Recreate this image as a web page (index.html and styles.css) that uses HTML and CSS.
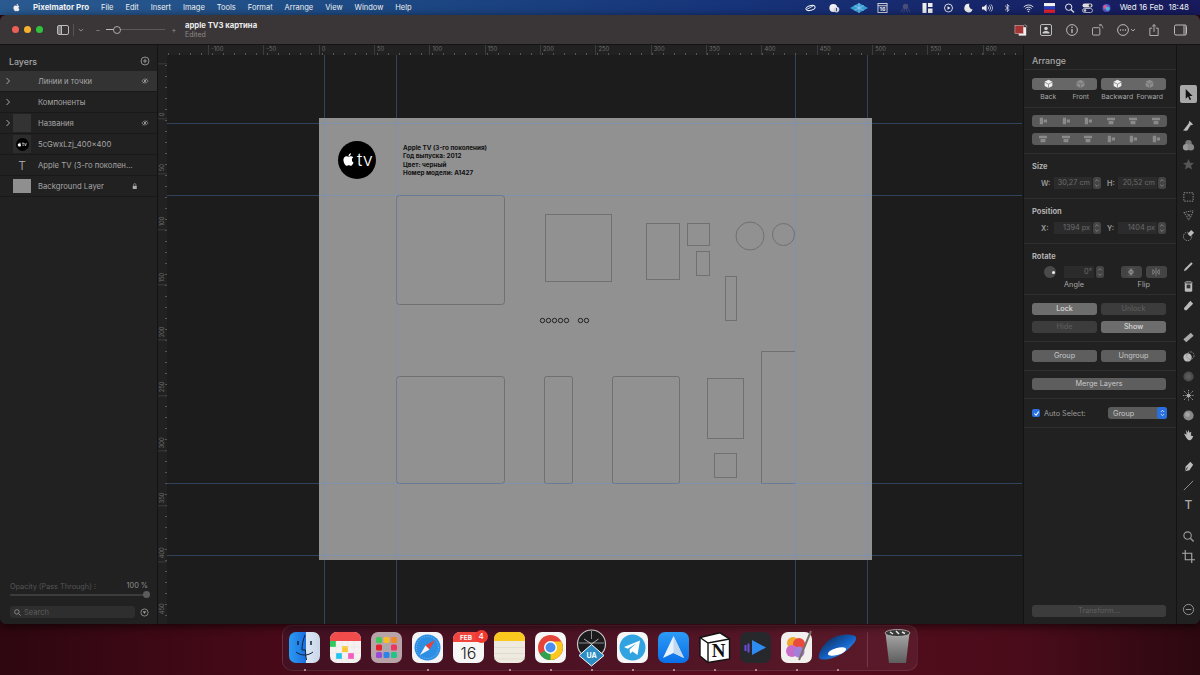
FILE: index.html
```html
<!DOCTYPE html>
<html lang="en">
<head>
<meta charset="utf-8">
<title>Pixelmator Pro</title>
<link rel="stylesheet" href="styles.css">
</head>
<body>
<svg class="defs" width="0" height="0" aria-hidden="true">
  <defs>
    <symbol id="apple" viewBox="0 0 24 24"><path d="M18.71 19.5c-.83 1.24-1.71 2.45-3.05 2.47-1.34.03-1.77-.79-3.29-.79-1.53 0-2 .77-3.27.82-1.31.05-2.3-1.32-3.14-2.53C4.25 17 2.94 12.45 4.7 9.39c.87-1.52 2.43-2.48 4.12-2.51 1.28-.02 2.5.87 3.29.87.78 0 2.26-1.07 3.81-.91.65.03 2.47.26 3.64 1.98-.09.06-2.17 1.28-2.15 3.81.03 3.02 2.65 4.03 2.68 4.04-.03.07-.42 1.44-1.38 2.83M13 3.5c.73-.83 1.94-1.46 2.94-1.5.13 1.17-.34 2.35-1.04 3.19-.69.85-1.83 1.51-2.95 1.42-.15-1.15.41-2.35 1.05-3.11z"/></symbol>
    <symbol id="step" viewBox="0 0 8 12"><rect width="8" height="12" rx="2.5" fill="#444"/><path d="M2.2 4.4 4 2.6l1.8 1.8M2.2 7.6 4 9.4l1.8-1.8" fill="none" stroke="#8a8a8a" stroke-width=".8"/></symbol>
    <symbol id="eye" viewBox="0 0 10 8"><path d="M.8 4C2 2.2 3.4 1.4 5 1.4S8 2.2 9.2 4C8 5.8 6.6 6.6 5 6.6S2 5.8.8 4Z" fill="none" stroke="#aaa" stroke-width=".8"/><circle cx="5" cy="4" r="1.4" fill="#aaa"/><path d="M8 .8 2 7.2" stroke="#aaa" stroke-width=".8"/></symbol>
    <symbol id="chev" viewBox="0 0 6 8"><path d="M1.5 1 4.5 4l-3 3" fill="none" stroke="#aaa" stroke-width="1"/></symbol>
    <symbol id="box-a" viewBox="0 0 12 10"><path d="M6 .4 10.2 2.5v4.6L6 9.4 1.8 7.1V2.5Z" fill="currentColor"/><path d="M1.8 3 6 5.2 10.2 3M6 5.2v4" fill="none" stroke="#666" stroke-width=".7"/></symbol>
    <symbol id="al-a" viewBox="0 0 12 10"><path d="M2 1h4v8H2zM7 3h4v4H7z" fill="#8a8a8a"/></symbol>
    <symbol id="al-b" viewBox="0 0 12 10"><path d="M1 1h10v3H1zM3 5h6v4H3z" fill="#8a8a8a"/></symbol>
    <linearGradient id="g-finder" x1="0" x2="1"><stop offset="0" stop-color="#2a9bf2"/><stop offset=".55" stop-color="#1d6fe0"/><stop offset=".56" stop-color="#dbe7f5"/><stop offset="1" stop-color="#c9d6e8"/></linearGradient>
    <linearGradient id="g-spark" x1="0" y1="0" x2="0" y2="1"><stop offset="0" stop-color="#2c9bf6"/><stop offset="1" stop-color="#0a6fe8"/></linearGradient>
    <linearGradient id="g-disk" x1="0" y1="0" x2="1" y2="1"><stop offset="0" stop-color="#0f1c36"/><stop offset=".55" stop-color="#1463c8"/><stop offset="1" stop-color="#4cb2ff"/></linearGradient>
    <linearGradient id="g-trash" x1="0" y1="0" x2="0" y2="1"><stop offset="0" stop-color="#a8a8a8"/><stop offset="1" stop-color="#5d5d5d"/></linearGradient>
  </defs>
</svg>

<div class="desktop">
  <header class="menubar">
    <nav class="menu">
      <svg class="apple-menu"><use href="#apple"/></svg>
      <span class="app-name">Pixelmator Pro</span>
      <span>File</span><span>Edit</span><span>Insert</span><span>Image</span><span>Tools</span><span>Format</span><span>Arrange</span><span>View</span><span>Window</span><span>Help</span>
    </nav>
    <div class="status">
      <div class="status-icons">
        <svg viewBox="0 0 14 10"><ellipse cx="7" cy="5" rx="6" ry="3" fill="none" stroke="#fff" stroke-width="1.2" transform="rotate(-15 7 5)"/><path d="M2 7 11 2" stroke="#fff"/></svg>
        <svg viewBox="0 0 14 12"><circle cx="5.5" cy="6" r="5" fill="#f2f2f2"/><circle cx="9.5" cy="8" r="3.6" fill="#dcdcf0"/><path d="M9.5 6v4" stroke="#223" stroke-width="1"/></svg>
        <svg class="wide" viewBox="0 0 18 10"><path d="M9 0 18 5 9 10 0 5Z" fill="#3a9ed8"/><path d="M9 0v10M4 2.5l10 5M14 2.5l-10 5" stroke="#bfe6fb" stroke-width=".5"/></svg>
        <svg viewBox="0 0 11 11"><rect x=".5" y=".5" width="10" height="10" fill="none" stroke="#ddd"/><path d="M.5 3h10" stroke="#ddd"/><text x="5.5" y="9.3" class="tiny-cal">16</text></svg>
        <svg viewBox="0 0 12 11"><circle cx="6" cy="3.8" r="3" fill="#4a4f78"/><path d="M3.5 6 1 10M5 7 4 10.5M7 7l1 3.5M8.5 6 11 10" stroke="#4a4f78"/></svg>
        <svg viewBox="0 0 10 10"><path d="M0 0h4v10H0zM5.5 0H10v4H5.5zM5.5 5.5H10V10H5.5z" fill="#eee"/></svg>
        <svg viewBox="0 0 10 10"><circle cx="5" cy="5" r="4" fill="none" stroke="#eee" stroke-width=".9"/><path d="M4 3.2 7 5 4 6.8Z" fill="#eee"/></svg>
        <svg viewBox="0 0 10 10"><path d="M6 .8A4.3 4.3 0 1 0 9.2 6.5 4 4 0 0 1 6 .8Z" fill="#eee"/></svg>
        <svg viewBox="0 0 12 10"><path d="M0 3.5h2L5 1v8L2 6.500H0Z" fill="#eee"/><path d="M6.500 3.500a2 2 0 0 1 0 3M8 2a4.200 4.200 0 0 1 0 6M9.700 1a6 6 0 0 1 0 8" fill="none" stroke="#eee" stroke-width=".8"/></svg>
        <svg viewBox="0 0 8 12"><path d="M1 3.200 6 8 3.800 10.500V1.500L6 4 1 8.800" fill="none" stroke="#eee" stroke-width=".9"/></svg>
        <svg viewBox="0 0 12 10"><path d="M.8 3.800a7.500 7.500 0 0 1 10.400 0M2.500 5.500a5 5 0 0 1 7 0M4.200 7.100a2.600 2.600 0 0 1 3.600 0" fill="none" stroke="#eee" stroke-width="1"/><circle cx="6" cy="8.800" r=".9" fill="#eee"/></svg>
        <svg viewBox="0 0 10 9"><path d="M0 0h10v3H0z" fill="#f4f4f4"/><path d="M0 3h10v3H0z" fill="#2a3fc0"/><path d="M0 6h10v3H0z" fill="#e0222c"/></svg>
        <svg viewBox="0 0 10 10"><circle cx="4.200" cy="4.200" r="3.200" fill="none" stroke="#eee" stroke-width="1"/><path d="m6.500 6.500 3 3" stroke="#eee" stroke-width="1.200"/></svg>
        <svg viewBox="0 0 10 10"><rect x="0" y=".5" width="10" height="4" rx="2" fill="#ddd"/><rect x="0" y="5.500" width="10" height="4" rx="2" fill="none" stroke="#ddd" stroke-width=".8"/><circle cx="7.500" cy="2.500" r="1.300" fill="#224"/><circle cx="2.500" cy="7.500" r="1.300" fill="#ddd"/></svg>
        <svg viewBox="0 0 10 10"><circle cx="5" cy="5" r="4" fill="#5a58c8"/><circle cx="3.800" cy="4" r="2" fill="#e05a90"/><circle cx="6.200" cy="5.800" r="2" fill="#48b8e0"/></svg>
      </div>
      <span class="clock-date">Wed 16 Feb</span>
      <span class="clock-time">18:48</span>
    </div>
  </header>

  <section class="window">
    <div class="toolbar">
      <div class="lights"><i class="light red"></i><i class="light yellow"></i><i class="light green"></i></div>
      <svg class="tb-sidebar" viewBox="0 0 12 10"><rect x=".5" y=".5" width="11" height="9" rx="1.500" fill="none" stroke="#bbb"/><path d="M1 1h3.500v8H1z" fill="#bbb" fill-opacity=".5"/><path d="M4.500 .5v9" stroke="#bbb"/></svg>
      <i class="tb-sep"></i>
      <svg class="tb-caret" viewBox="0 0 8 5"><path d="m1 1 3 3 3-3" fill="none" stroke="#aaa"/></svg>
      <div class="zoom">
        <span class="zoom-sign">−</span>
        <div class="zoom-track"><i class="zoom-fill"></i><i class="zoom-knob"></i></div>
        <span class="zoom-sign">+</span>
      </div>
      <div class="doc-title"><b>apple TV3 картина</b><span>Edited</span></div>
      <div class="tb-right">
        <svg class="tb-i1" viewBox="0 0 16 14"><rect x="5" y="4" width="8" height="9" fill="#eee"/><rect x="1" y="2" width="9" height="9" fill="#a83434" stroke="#d8d8d8" stroke-width=".5"/><path d="M11 1.500a3 3 0 0 1 3 2.500" fill="none" stroke="#aaa" stroke-width=".8"/></svg>
        <svg class="tb-i2" viewBox="0 0 12 12"><rect x=".5" y=".5" width="11" height="11" rx="1.500" fill="none" stroke="#bbb"/><circle cx="6" cy="4.500" r="1.800" fill="#ccc"/><path d="M2.500 9.500h7V8.400C8.500 7.300 7 7 6 7s-2.500.3-3.500 1.400Z" fill="#ccc"/></svg>
        <svg class="tb-i3" viewBox="0 0 12 12"><circle cx="6" cy="6" r="5.400" fill="none" stroke="#bbb"/><path d="M6 5v4" stroke="#ccc" stroke-width="1.200"/><circle cx="6" cy="3.200" r=".8" fill="#ccc"/></svg>
        <svg class="tb-i4" viewBox="0 0 13 13"><rect x=".5" y="4" width="8" height="8" rx="1" fill="none" stroke="#bbb"/><path d="M8 .8a4 4 0 0 1 4 4M10.500.5 8 .8l.8 2" fill="none" stroke="#aaa" stroke-width=".8"/></svg>
        <svg class="tb-i5" viewBox="0 0 18 12"><circle cx="6" cy="6" r="5.400" fill="none" stroke="#bbb"/><circle cx="3.500" cy="6" r=".7" fill="#ccc"/><circle cx="6" cy="6" r=".7" fill="#ccc"/><circle cx="8.500" cy="6" r=".7" fill="#ccc"/><path d="m14 5 2 2 2-2" fill="none" stroke="#aaa"/></svg>
        <svg class="tb-i6" viewBox="0 0 10 13"><path d="M3 4.500H.5v8h9v-8H7" fill="none" stroke="#bbb"/><path d="M5 8.500V.8M3 2.500 5 .6l2 1.900" fill="none" stroke="#bbb"/></svg>
        <svg class="tb-i7" viewBox="0 0 13 11"><rect x=".5" y=".5" width="12" height="10" rx="1.500" fill="none" stroke="#bbb"/><path d="M9 1h3v9H9z" fill="#bbb" fill-opacity=".5"/></svg>
      </div>
    </div>

    <div class="workspace">
      <aside class="layers">
        <div class="layers-head"><span>Layers</span><svg viewBox="0 0 10 10"><circle cx="5" cy="5" r="4" fill="none" stroke="#aaa" stroke-width=".8"/><path d="M5 2.800v4.400M2.800 5h4.400" stroke="#aaa" stroke-width=".8"/></svg></div>
        <ul class="layer-list">
          <li class="layer selected"><svg class="disc"><use href="#chev"/></svg><i class="thumb none"></i><span class="name">Линии и точки</span><svg class="eye"><use href="#eye"/></svg></li>
          <li class="layer"><svg class="disc"><use href="#chev"/></svg><i class="thumb none"></i><span class="name">Компоненты</span></li>
          <li class="layer"><svg class="disc"><use href="#chev"/></svg><i class="thumb dark"></i><span class="name">Названия</span><svg class="eye"><use href="#eye"/></svg></li>
          <li class="layer"><i class="disc"></i><span class="thumb logo"><span class="mini"><svg><use href="#apple"/></svg><span>tv</span></span></span><span class="name">5cGwxLzj_400x400</span></li>
          <li class="layer"><i class="disc"></i><span class="thumb letter">T</span><span class="name">Apple TV (3-го поколен…</span></li>
          <li class="layer"><i class="disc"></i><i class="thumb gray"></i><span class="name">Background Layer</span><svg class="lock" viewBox="0 0 8 9"><path d="M1 4h6v5H1z" fill="#aaa"/><path d="M2.300 4V2.600a1.700 1.700 0 0 1 3.400 0V4" fill="none" stroke="#aaa"/></svg></li>
        </ul>
        <div class="layers-foot">
          <div class="opacity"><span class="op-label">Opacity (Pass Through) ⁝</span><span class="op-val">100 %</span></div>
          <div class="op-track"><i></i></div>
          <div class="search-row">
            <div class="search"><svg viewBox="0 0 9 9"><circle cx="3.700" cy="3.700" r="2.900" fill="none" stroke="#999"/><path d="m6 6 2.500 2.500" stroke="#999" stroke-width="1.100"/></svg><span>Search</span></div>
            <svg class="filter" viewBox="0 0 10 10"><circle cx="5" cy="5" r="4" fill="none" stroke="#999" stroke-width=".9"/><path d="M3 3.500h4L5 6.800Z" fill="#999"/></svg>
          </div>
        </div>
      </aside>

      <main class="canvas">
        <div class="ruler-top">
          <span>-100</span><span>-50</span><span>0</span><span>50</span><span>100</span><span>150</span><span>200</span><span>250</span><span>300</span><span>350</span><span>400</span><span>450</span><span>500</span><span>550</span><span>600</span>
        </div>
        <div class="canvas-body">
          <div class="ruler-left">
            <span>0</span><span>50</span><span>100</span><span>150</span><span>200</span><span>250</span><span>300</span><span>350</span><span>400</span><span>450</span>
          </div>
          <div class="stage">
            <div class="page">
              <div class="page-logo"><svg><use href="#apple"/></svg><span>tv</span></div>
              <div class="page-text">
                <p>Apple TV (3-го поколения)</p>
                <p>Год выпуска: 2012</p>
                <p>Цвет: черный</p>
                <p>Номер модели: A1427</p>
              </div>
            </div>
            <svg class="overlay" viewBox="167 55 855 569">
              <g class="outlines">
                <rect x="396.500" y="195.500" width="108" height="109" rx="3"/>
                <rect x="545.500" y="214.500" width="66" height="67"/>
                <rect x="646.500" y="223.500" width="33" height="56"/>
                <rect x="687.500" y="223.500" width="22" height="22"/>
                <rect x="696.500" y="251.500" width="13" height="24"/>
                <circle cx="750" cy="236" r="14"/>
                <circle cx="783.500" cy="234.500" r="11"/>
                <rect x="725.500" y="276.500" width="11" height="44"/>
                <rect x="396.500" y="376.500" width="108" height="107" rx="3"/>
                <rect x="544.500" y="376.500" width="28" height="107" rx="2"/>
                <rect x="612.500" y="376.500" width="67" height="107" rx="2"/>
                <rect x="707.500" y="378.500" width="36" height="60"/>
                <rect x="714.500" y="453.500" width="22" height="24"/>
                <path d="M795 351.500h-33.500v132H795"/>
              </g>
              <g class="dots">
                <circle cx="542.500" cy="320.500" r="2.200"/>
                <circle cx="548.500" cy="320.500" r="2.200"/>
                <circle cx="554.500" cy="320.500" r="2.200"/>
                <circle cx="560.500" cy="320.500" r="2.200"/>
                <circle cx="566.500" cy="320.500" r="2.200"/>
                <circle cx="580.500" cy="320.500" r="2.200"/>
                <circle cx="586.500" cy="320.500" r="2.200"/>
              </g>
              <g class="guides">
                <path d="M324.500 55v569M396.500 55v569M795.500 55v569M867.500 55v569"/>
                <path d="M167 123.500h855M167 195.500h855M167 483.500h855M167 555.500h855"/>
              </g>
            </svg>
          </div>
        </div>
      </main>

      <aside class="inspector">
        <div class="ins-title">Arrange</div>
        <div class="sec s1">
          <div class="two">
            <div>
              <div class="seg"><svg class="on"><use href="#box-a"/></svg><svg class="off"><use href="#box-a"/></svg></div>
              <div class="seg-labels"><span>Back</span><span>Front</span></div>
            </div>
            <div>
              <div class="seg"><svg class="on"><use href="#box-a"/></svg><svg class="off"><use href="#box-a"/></svg></div>
              <div class="seg-labels"><span>Backward</span><span>Forward</span></div>
            </div>
          </div>
        </div>
        <div class="sec s2">
          <div class="bar"><svg><use href="#al-a"/></svg><svg><use href="#al-a"/></svg><svg><use href="#al-a"/></svg><svg><use href="#al-b"/></svg><svg><use href="#al-b"/></svg><svg><use href="#al-b"/></svg></div>
          <div class="bar"><svg><use href="#al-b"/></svg><svg><use href="#al-b"/></svg><svg><use href="#al-b"/></svg><svg><use href="#al-a"/></svg><svg><use href="#al-a"/></svg><svg><use href="#al-a"/></svg></div>
        </div>
        <div class="sec s3">
          <div class="sec-title">Size</div>
          <div class="fields">
            <label>W:</label><span class="field">30,27 cm</span><svg class="stepper"><use href="#step"/></svg>
            <label>H:</label><span class="field">20,52 cm</span><svg class="stepper"><use href="#step"/></svg>
          </div>
        </div>
        <div class="sec s3">
          <div class="sec-title">Position</div>
          <div class="fields">
            <label>X:</label><span class="field">1394 px</span><svg class="stepper"><use href="#step"/></svg>
            <label>Y:</label><span class="field">1404 px</span><svg class="stepper"><use href="#step"/></svg>
          </div>
        </div>
        <div class="sec s5">
          <div class="sec-title">Rotate</div>
          <div class="rotate">
            <div class="rot-left">
              <div class="rot-row"><i class="knob"></i><span class="field angle">0°</span><svg class="stepper"><use href="#step"/></svg></div>
              <span class="cap">Angle</span>
            </div>
            <div class="rot-right">
              <div class="rot-row">
                <span class="flip"><svg viewBox="0 0 12 10"><path d="M1.500 0h9M1.500 10h9M6 1 2.500 4.500h7ZM6 9 2.500 5.500h7Z" fill="#8a8a8a" stroke="#8a8a8a" stroke-width=".6"/></svg></span>
                <span class="flip"><svg viewBox="0 0 12 10"><path d="M6 0v10M2 2v6l3-3ZM10 2v6L7 5Z" fill="none" stroke="#8a8a8a"/></svg></span>
              </div>
              <span class="cap">Flip</span>
            </div>
          </div>
        </div>
        <div class="sec s6">
          <div class="btns"><span class="btn">Lock</span><span class="btn dim">Unlock</span></div>
          <div class="btns"><span class="btn dim">Hide</span><span class="btn">Show</span></div>
        </div>
        <div class="sec s7">
          <div class="btns"><span class="btn mid">Group</span><span class="btn mid">Ungroup</span></div>
        </div>
        <div class="sec s8">
          <span class="btn mid full">Merge Layers</span>
        </div>
        <div class="sec s9">
          <div class="auto">
            <span class="check"><svg viewBox="0 0 8 8"><path d="m1.500 4 2 2 3-4.200" fill="none" stroke="#fff" stroke-width="1.200"/></svg></span>
            <span class="auto-label">Auto Select:</span>
            <span class="select"><span>Group</span><i class="sel-arrow"><svg viewBox="0 0 6 9"><path d="M1 3.300 3 1.300l2 2M1 5.700l2 2 2-2" fill="none" stroke="#fff" stroke-width=".9"/></svg></i></span>
          </div>
        </div>
        <div class="ins-foot"><span class="btn dim full">Transform...</span></div>
      </aside>

      <aside class="tools">
        <span class="tool active"><svg viewBox="0 0 12 14"><path d="M3 1v10.500l2.500-2.300 1.700 3.800 1.600-.7-1.700-3.800h3.300Z" fill="#111"/></svg></span>
        <span class="tool"><svg viewBox="0 0 14 14"><path d="M8 2 12 6 9 7 7 5ZM7 5l2 2-3 5c-2 1-4 .5-5 0 2-.5 2-2 3-3Z" fill="#bbb"/></svg></span>
        <span class="tool"><svg viewBox="0 0 14 14"><circle cx="7" cy="4.500" r="3.500" fill="#777"/><circle cx="4.500" cy="9" r="3.500" fill="#999"/><circle cx="9.500" cy="9" r="3.500" fill="#888"/></svg></span>
        <span class="tool"><svg viewBox="0 0 14 14"><path d="m7 1 1.800 4 4.200.4-3.200 2.800 1 4.300L7 10.300 3.200 12.500l1-4.300L1 5.400 5.200 5Z" fill="#555"/></svg></span>
        <span class="tool g"><svg viewBox="0 0 14 14"><rect x="2" y="3" width="10" height="9" fill="none" stroke="#999" stroke-dasharray="1.500 1.200"/></svg></span>
        <span class="tool"><svg viewBox="0 0 14 14"><path d="M2 4c3-1 8-2 10-2-1 3-2 6-5 10C6 9 4 6 2 4Z" fill="none" stroke="#999" stroke-dasharray="1.300 1"/><path d="M5 5l4 1-1 3Z" fill="#666"/></svg></span>
        <span class="tool"><svg viewBox="0 0 14 14"><circle cx="6" cy="8" r="4.500" fill="none" stroke="#999" stroke-dasharray="1.500 1"/><path d="M6 5 10 1l3 3-4 4Z" fill="#bbb"/></svg></span>
        <span class="tool g"><svg viewBox="0 0 14 14"><path d="m2 12 1-2.500 7-7 1.500 1.500-7 7Z" fill="#bbb"/></svg></span>
        <span class="tool"><svg viewBox="0 0 14 14"><path d="M3 3h8v9c-1 1-7 1-8 0Z" fill="#bbb"/><ellipse cx="7" cy="3" rx="4" ry="1.500" fill="#555" stroke="#bbb" stroke-width=".7"/><path d="M5 5h4v4H5z" fill="#333"/></svg></span>
        <span class="tool"><svg viewBox="0 0 14 14"><path d="m9 2 3 3-7 7H3l-1-2Z" fill="#bbb"/></svg></span>
        <span class="tool g"><svg viewBox="0 0 14 14"><path d="m9.500 2 3 3-8 7-3-3Z" fill="#aaa"/></svg></span>
        <span class="tool"><svg viewBox="0 0 14 14"><circle cx="6" cy="8" r="4.500" fill="#bbb"/><circle cx="9" cy="6" r="4" fill="none" stroke="#888" stroke-dasharray="2 1"/></svg></span>
        <span class="tool"><svg viewBox="0 0 14 14"><circle cx="7" cy="7" r="5.500" fill="#4c4c4c"/><circle cx="7" cy="7" r="3" fill="#5a5a5a"/></svg></span>
        <span class="tool"><svg viewBox="0 0 14 14"><path d="M2 2l10 10M12 2 2 12M7 1v12M1 7h12" stroke="#999" stroke-dasharray="1.500 1"/><circle cx="7" cy="7" r="2" fill="#aaa"/></svg></span>
        <span class="tool"><svg viewBox="0 0 14 14"><circle cx="7" cy="7" r="5.500" fill="#888"/><circle cx="6" cy="6" r="2.500" fill="#a5a5a5"/></svg></span>
        <span class="tool"><svg viewBox="0 0 14 14"><path d="M2 6 5 7 4 2l2 3 1-3 1 3 2-1-.5 4 2.500 1c-.5 3-3 5-5 4S4 9 2 6Z" fill="#bbb"/></svg></span>
        <span class="tool g"><svg viewBox="0 0 14 14"><path d="m9 2 3 3-4 6-5 1 1-5Z" fill="#bbb"/><path d="m3 12 3-4" stroke="#222"/></svg></span>
        <span class="tool"><svg viewBox="0 0 14 14"><path d="m2 12 10-10" stroke="#999"/></svg></span>
        <span class="tool"><span class="t-glyph">T</span></span>
        <span class="tool g"><svg viewBox="0 0 14 14"><circle cx="6" cy="6" r="4" fill="none" stroke="#999" stroke-width="1.200"/><path d="m9 9 3.500 3.500" stroke="#999" stroke-width="1.500"/></svg></span>
        <span class="tool"><svg viewBox="0 0 14 14"><path d="M3.500 0v10.500H14M0 3.500h10.500V14" fill="none" stroke="#aaa" stroke-width="1.200"/></svg></span>
        <span class="tool last"><svg viewBox="0 0 14 14"><circle cx="7" cy="7" r="5.500" fill="none" stroke="#999"/><path d="M4 7h6" stroke="#999"/></svg></span>
      </aside>
    </div>
  </section>

  <footer class="dock-zone">
    <div class="dock">
      <div class="app run"><svg viewBox="0 0 31 31"><rect width="31" height="31" rx="7" fill="url(#g-finder)"/><path d="M16 3c-2 5-3 10-3 15h3.500c0 3 .3 6 1 10M7 20c5 4 12 4 17 0" fill="none" stroke="#123" stroke-width="1"/><path d="M9 9v4M22 9v4" stroke="#123" stroke-width="1.500"/></svg></div>
      <div class="app"><svg viewBox="0 0 31 31"><rect width="31" height="31" rx="7" fill="#f6f2f2"/><path d="M0 9V7a7 7 0 0 1 7-7h17a7 7 0 0 1 7 7v2Z" fill="#f14c4c"/><path d="M0 9h6v6H0z" fill="#30c860"/><path d="M12 14h6v6h-6z" fill="#fdc82f"/><path d="M6 21h6v6H6z" fill="#22c4f0"/><path d="M18 21h6v6h-6z" fill="#f45cc0"/><path d="M6 9v22M12 9v22M18 9v22M24 9v22M0 15h31M0 21h31M0 27h31" stroke="#e6e0e0" stroke-width=".4"/></svg></div>
      <div class="app"><svg viewBox="0 0 31 31"><rect width="31" height="31" rx="7" fill="#b8a3a8"/><g><rect x="5" y="5" width="6" height="6" rx="1.500" fill="#3fca5c"/><rect x="12.500" y="5" width="6" height="6" rx="1.500" fill="#f8be2a"/><rect x="20" y="5" width="6" height="6" rx="1.500" fill="#f08a24"/><rect x="5" y="12.500" width="6" height="6" rx="1.500" fill="#e3232c"/><rect x="12.500" y="12.500" width="6" height="6" rx="1.500" fill="#a9a9a9"/><rect x="20" y="12.500" width="6" height="6" rx="1.500" fill="#ec3560"/><rect x="5" y="20" width="6" height="6" rx="1.500" fill="#9a4ad8"/><rect x="12.500" y="20" width="6" height="6" rx="1.500" fill="#2c82e8"/><rect x="20" y="20" width="6" height="6" rx="1.500" fill="#20c48a"/></g></svg></div>
      <div class="app run"><svg viewBox="0 0 31 31"><rect width="31" height="31" rx="7" fill="#f4f4f4"/><circle cx="15.500" cy="15.500" r="13" fill="#2c8fe4"/><circle cx="15.500" cy="15.500" r="11" fill="none" stroke="#a8d4f8" stroke-width="1" stroke-dasharray=".6 1.600"/><path d="m23 8-9.500 5.500 4 4Z" fill="#ef3e36"/><path d="m8 23 5.500-9.500 4 4Z" fill="#f4f4f4"/></svg></div>
      <div class="app"><svg viewBox="0 0 31 31"><rect width="31" height="31" rx="7" fill="#f6f6f6"/><path d="M0 10V7a7 7 0 0 1 7-7h17a7 7 0 0 1 7 7v3Z" fill="#f0443c"/><text x="13" y="8" class="cal-month">FEB</text><text x="15.500" y="27" class="cal-day">16</text></svg><span class="badge">4</span></div>
      <div class="app run"><svg viewBox="0 0 31 31"><rect width="31" height="31" rx="7" fill="#efeae0"/><path d="M0 9V7a7 7 0 0 1 7-7h17a7 7 0 0 1 7 7v2Z" fill="#fbc91d"/><path d="M0 15.500h31M0 21.500h31M0 27h31" stroke="#d8d4ca" stroke-width=".6"/></svg></div>
      <div class="app run"><svg viewBox="0 0 31 31"><rect width="31" height="31" rx="7" fill="#f6f6f6"/><circle cx="15.500" cy="15.500" r="12.500" fill="#e5443a"/><path d="M15.500 15.500 4.700 21.700A12.500 12.500 0 0 0 15.500 28c1.600 0 3-.3 4.300-.8Z" fill="#2fa14f"/><path d="M15.500 9.500H26.300A12.500 12.500 0 0 1 15.500 28Z" fill="#fbc91d"/><circle cx="15.500" cy="15.500" r="6.500" fill="#fff"/><circle cx="15.500" cy="15.500" r="5" fill="#4a8ef0"/></svg></div>
      <div class="app run"><svg viewBox="0 0 31 31"><circle cx="15.500" cy="12" r="14" fill="#1b1b1e" stroke="#c8c8c8" stroke-width="1.200"/><path d="M15.500 -1v8M3 11h25" stroke="#bbb" stroke-width=".7"/><path d="M15.500 12 8 7M15.500 12l7-5" stroke="#ddd" stroke-width=".8"/><path d="M15.500 12.500 28 23.500 15.500 34 3 23.500Z" fill="#2c8ec4" stroke="#fff" stroke-width="1"/><text x="15.500" y="26" class="ua">UA</text></svg></div>
      <div class="app run"><svg viewBox="0 0 31 31"><rect width="31" height="31" rx="7" fill="#f6f6f6"/><circle cx="15.500" cy="15.500" r="13" fill="#30a3e0"/><path d="M7 15 23 8.500 20.500 23l-5-3.600-2.400 2.400-.6-4.300 7-6.300-8.700 5.500Z" fill="#fff"/></svg></div>
      <div class="app run"><svg viewBox="0 0 31 31"><rect width="31" height="31" rx="7" fill="url(#g-spark)"/><path d="M15.500 4 26 26l-10.500-5L5 26Z" fill="#e8f2fc"/><path d="M15.500 4 26 26l-10.500-5Z" fill="#c2d8f0"/></svg></div>
      <div class="app run"><svg viewBox="0 0 31 31"><path d="M1 5.500 21 .8 30.500 7V27L9 30.500 1 24Z" fill="#fff" stroke="#111" stroke-width="1.400"/><path d="M1 5.500 9 11 30.500 7M9 11v19" fill="none" stroke="#111" stroke-width="1.400"/><text x="19.500" y="25" class="notion-n">N</text></svg></div>
      <div class="app run"><svg viewBox="0 0 31 31"><rect width="31" height="31" rx="7" fill="#26282c"/><path d="M12 8 26 15.500 12 23Z" fill="#2e8cf0"/><path d="M5.500 13v6M8.500 11.500v9" stroke="#6a4ad8" stroke-width="2"/></svg></div>
      <div class="app run"><svg viewBox="0 0 31 31"><rect width="31" height="31" rx="7" fill="#f2f0ee"/><circle cx="12" cy="11" r="6" fill="#f0a52c"/><circle cx="18" cy="12" r="6" fill="#ea4a3c"/><circle cx="11" cy="19" r="6" fill="#c86ac8"/><circle cx="18" cy="20" r="5.500" fill="#a080d8"/><path d="M30 -1 18 28" stroke="#7a7068" stroke-width="2"/></svg></div>
      <div class="app run"><svg viewBox="0 0 31 31"><path d="M3 12C9 4 24 0 33 4 37 7 30 14 24 19 15 26 0 30-3 26-4 22 0 15 3 12Z" fill="url(#g-disk)"/><ellipse cx="15" cy="19.500" rx="9.500" ry="3.500" fill="#fff" transform="rotate(-17 15 19.500)"/></svg></div>
      <i class="dock-sep"></i>
      <div class="app trash"><svg viewBox="0 0 27 35"><path d="M1.500 4 5 34h17l3.500-30Z" fill="url(#g-trash)"/><ellipse cx="13.500" cy="4" rx="12.500" ry="3.500" fill="#3a3a3a" stroke="#bbb" stroke-width=".8"/><path d="M6 3 9 5M12 2l3 3M18 3l3 1.500" stroke="#e8e8e8" stroke-width="1.500"/></svg></div>
    </div>
  </footer>
</div>
</body>
</html>
```

FILE: styles.css
```css
* { box-sizing: border-box; }
html, body { margin: 0; padding: 0; }
body { width: 1200px; height: 675px; overflow: hidden; font-family: "Inter", "Liberation Sans", sans-serif; background: #1a0a12; }
svg { display: block; }
ul { list-style: none; margin: 0; padding: 0; }
p { margin: 0; }
.defs { position: absolute; }

.desktop { width: 1200px; height: 675px; display: flex; flex-direction: column; background: linear-gradient(90deg, #2e0710 0%, #4f0a1a 30%, #5a0c1e 60%, #4a0c1a 85%, #2c0810 100%); }

/* menu bar */
.menubar { height: 15px; flex: none; display: flex; justify-content: space-between; background: linear-gradient(90deg, #2a5a90 0%, #1d4a84 30%, #17347a 60%, #171a5c 100%); color: #f2f2f2; font-size: 7.500px; line-height: 15px; }
.menu { display: flex; gap: 12px; padding-left: 12px; align-items: center; }
.apple-menu { width: 9px; height: 11px; fill: #f2f2f2; }
.app-name { font-weight: 700; font-size: 7.900px; }
.status { display: flex; align-items: center; padding-right: 11px; font-size: 8px; }
.status-icons { display: grid; grid-template-columns: 24px 24px 24px 24px 22px 22px 20px 19px 20px 20px 21px 21px 19px 18px 19px; justify-items: center; align-items: center; height: 15px; margin-right: 4px; }
.status-icons svg { width: 11px; height: 10px; }
.status-icons svg.wide { width: 18px; height: 10px; }
.tiny-cal { font-size: 6px; fill: #eee; text-anchor: middle; font-weight: 700; }
.clock-date { margin-right: 5px; }

/* window */
.window { height: 609px; flex: none; display: flex; flex-direction: column; border-radius: 6px; overflow: hidden; background: #1f1f1f; position: relative; box-shadow: 0 2px 10px rgba(0, 0, 0, .65); }
.toolbar { height: 30px; flex: none; display: flex; align-items: center; background: #3a3536; padding-left: 12px; border-bottom: 1px solid #141414; }
.lights { display: flex; gap: 5px; margin-right: 11px; }
.light { width: 7px; height: 7px; border-radius: 50%; }
.red { background: #ec5f56; }
.yellow { background: #f3b12c; }
.green { background: #30c23d; }
.tb-sidebar { width: 12px; height: 10px; margin-left: 3px; }
.tb-sep { width: 1px; height: 12px; background: #555; margin: 0 3px 0 4px; }
.tb-caret { width: 6px; height: 4px; margin-left: 1px; }
.zoom { display: flex; align-items: center; margin-left: 11px; }
.zoom-sign { font-size: 8px; color: #8a8a8a; width: 6px; text-align: center; }
.zoom-track { width: 59px; height: 1px; background: #5d595a; margin: 0 6px 0 5px; position: relative; }
.zoom-fill { display: block; width: 8px; height: 1px; background: #bbb; }
.zoom-knob { position: absolute; left: 7px; top: -3.500px; width: 8px; height: 8px; border-radius: 50%; background: #3a3536; border: 1px solid #aaa; }
.doc-title { display: flex; flex-direction: column; margin-left: 8px; font-size: 7.700px; line-height: 9px; color: #ececec; }
.doc-title b { font-weight: 700; }
.doc-title span { color: #8d8a8a; font-size: 7px; }
.tb-right { margin-left: auto; display: flex; align-items: center; }
.tb-right svg { height: 12px; width: 12px; }
.tb-i1 { margin-right: 11px; width: 15px !important; height: 14px !important; }
.tb-i2 { margin-right: 14px; }
.tb-i3 { margin-right: 14px; }
.tb-i4 { margin-right: 13px; }
.tb-i5 { margin-right: 14px; width: 18px !important; }
.tb-i6 { margin-right: 15px; width: 10px !important; }
.tb-i7 { margin-right: 13px; width: 13px !important; }

.workspace { flex: 1; display: flex; min-height: 0; }

/* layers */
.layers { width: 158px; flex: none; display: flex; flex-direction: column; background: #212121; border-right: 1px solid #131313; color: #a6a6a6; font-size: 7.700px; }
.layers-head { height: 26px; flex: none; display: flex; align-items: center; justify-content: space-between; padding: 6px 7px 0 9px; font-size: 8.800px; color: #a8a8a8; font-weight: 500; }
.layers-head svg { width: 10px; height: 10px; }
.layer { height: 21px; display: flex; align-items: center; border-bottom: 1px solid #191919; padding-right: 8px; }
.layer.selected { background: #333333; }
.disc { width: 6px; height: 8px; margin-left: 5px; margin-right: 2px; flex: none; }
.thumb { width: 18px; height: 18px; flex: none; display: flex; align-items: center; justify-content: center; margin-right: 7px; }
.thumb.dark { background: #333; }
.thumb.gray { background: #8f8f8f; height: 14px; }
.thumb.logo { background: #2c2c2c; }
.mini { width: 13px; height: 13px; background: #000; border-radius: 50%; display: flex; align-items: center; justify-content: center; color: #fff; font-size: 5px; line-height: 1; }
.mini svg { width: 5px; height: 5px; fill: #fff; }
.thumb.letter { font-size: 12px; font-weight: 300; color: #b5b5b5; }
.name { flex: 1; white-space: nowrap; }
.eye { width: 8px; height: 6px; flex: none; }
.lock { width: 5.500px; height: 6px; flex: none; margin-right: 12px; }
.layers-foot { margin-top: auto; padding: 0 8px 6px 10px; }
.opacity { display: flex; justify-content: space-between; font-size: 7.300px; color: #555; padding-right: 1px; }
.op-val { color: #8f8f8f; }
.op-track { height: 2px; background: #3c3c3c; margin: 3px 0 5px; position: relative; border-radius: 1px; }
.op-track i { position: absolute; right: -1px; top: -3px; width: 7px; height: 7px; border-radius: 50%; background: #5c5c5c; }
.search-row { display: flex; align-items: center; justify-content: space-between; margin-top: 10px; }
.search { width: 125px; height: 12px; background: #2e2e2e; border-radius: 3px; display: flex; align-items: center; padding-left: 4px; color: #5c5c5c; font-size: 7.500px; gap: 3px; }
.search svg { width: 7px; height: 7px; }
.filter { width: 9px; height: 9px; margin-right: 0; }

/* canvas */
.canvas { flex: 1; min-width: 0; display: flex; flex-direction: column; background: #1c1c1c; }
.ruler-top { height: 10px; flex: none; display: flex; overflow: hidden; padding-left: 50px; background: #212121 repeating-linear-gradient(90deg, transparent 0 10px, #555 10px 11px) 0 8px / 100% 2px no-repeat; font-size: 5.800px; line-height: 8px; color: #6f6f6f; }
.ruler-top span { flex: 0 0 55.350px; border-left: 1px solid #3c3c3c; padding-left: 2px; }
.canvas-body { flex: 1; display: flex; min-height: 0; }
.ruler-left { width: 9px; flex: none; display: flex; flex-direction: column; overflow: hidden; padding-top: 7.700px; background: #212121 repeating-linear-gradient(180deg, transparent 0 10px, #555 10px 11px) 7px 0 / 2px 100% no-repeat; font-size: 5.800px; color: #6f6f6f; }
.ruler-left span { flex: 0 0 55.350px; writing-mode: vertical-rl; transform: rotate(180deg); line-height: 8px; border-top: 0; border-bottom: 1px solid #3c3c3c; padding-top: 2px; text-align: left; }
.stage { flex: 1; position: relative; overflow: hidden; }
.page { position: absolute; left: 152px; top: 63px; width: 553px; height: 442px; background: #919191; padding: 23px 0 0 19px; display: flex; align-items: flex-start; gap: 27px; }
.page-logo { width: 38px; height: 38px; border-radius: 50%; background: #000; display: flex; align-items: center; justify-content: center; color: #fff; font-size: 18px; font-weight: 300; line-height: 1; }
.page-logo svg { width: 15px; height: 15px; fill: #fff; margin-right: 1px; margin-top: -2px; }
.page-text { font-size: 6.300px; line-height: 8.400px; font-weight: 700; color: #111; margin-top: 3px; }
.overlay { position: absolute; left: 0; top: 0; width: 855px; height: 569px; }
.outlines { fill: none; stroke: #707070; stroke-width: 1; }
.dots { fill: none; stroke: #222; stroke-width: 1; }
.guides { fill: none; stroke: rgba(90, 150, 220, .33); stroke-width: 1; }

/* inspector */
.inspector { width: 153px; flex: none; display: flex; flex-direction: column; background: #212121; border-left: 1px solid #131313; color: #a8a8a8; font-size: 7.300px; }
.ins-title { height: 25px; padding: 10px 8px 0; font-size: 8.800px; line-height: 12px; font-weight: 500; border-bottom: 1px solid #2e2e2e; }
.sec { padding-left: 8px; padding-right: 9px; border-bottom: 1px solid #2e2e2e; }
.s1 { padding-top: 8px; padding-bottom: 6px; }
.s2 { padding-top: 7px; padding-bottom: 8px; display: flex; flex-direction: column; gap: 6px; }
.s3 { padding-top: 8px; padding-bottom: 9px; }
.s5 { padding-top: 8px; padding-bottom: 5px; }
.s6 { padding-top: 8px; padding-bottom: 8px; display: flex; flex-direction: column; gap: 6px; }
.s7 { padding-top: 8px; padding-bottom: 8px; }
.s8 { padding-top: 7px; padding-bottom: 8px; }
.s9 { padding-top: 8px; padding-bottom: 8px; }
.two { display: grid; grid-template-columns: 65px 65px; gap: 4px; }
.seg { height: 12px; background: #676767; border-radius: 3px; display: grid; grid-template-columns: 1fr 1fr; align-items: center; justify-items: center; }
.seg svg { width: 11px; height: 10px; }
.seg .on { color: #f0f0f0; }
.seg .off { color: #8d8d8d; }
.seg-labels { display: grid; grid-template-columns: 1fr 1fr; text-align: center; line-height: 9px; margin-top: 2px; white-space: nowrap; font-size: 6.800px; }
.bar { height: 12px; background: #5a5a5a; border-radius: 3px; display: grid; grid-template-columns: repeat(6, 1fr); align-items: center; justify-items: center; }
.bar svg { width: 10px; height: 8px; }
.sec-title { font-size: 7.500px; font-weight: 700; line-height: 9px; color: #b0b0b0; }
.fields { display: grid; grid-template-columns: 22px 38px 9px 17px 39px 9px; margin-top: 6px; align-items: center; height: 12px; }
.fields label { font-weight: 600; font-size: 7.300px; padding-left: 9px; color: #9a9a9a; }
.fields label:nth-of-type(2) { padding-left: 6px; }
.field { height: 12px; background: #2b2b2b; color: #6c6c6c; text-align: right; line-height: 12px; padding-right: 2px; font-size: 7.300px; white-space: nowrap; }
.stepper { width: 8px; height: 12px; justify-self: end; }
.rotate { display: flex; justify-content: space-between; margin-top: 5px; padding-left: 12px; }
.rot-left, .rot-right { display: flex; flex-direction: column; align-items: center; }
.rot-row { display: flex; align-items: center; height: 12px; gap: 2px; }
.rot-right .rot-row { gap: 3.500px; }
.knob { width: 12px; height: 12px; border-radius: 50%; background: #4a4a4a; margin-right: 6px; position: relative; }
.knob::after { content: ""; position: absolute; right: 1.500px; top: 4.500px; width: 3px; height: 3px; border-radius: 50%; background: #eee; }
.field.angle { width: 30px; }
.cap { line-height: 9px; margin-top: 2px; }
.flip { width: 21.500px; height: 12px; background: #444; border-radius: 3px; display: flex; align-items: center; justify-content: center; }
.flip svg { width: 10px; height: 8px; }
.btns { display: grid; grid-template-columns: 65px 65px; gap: 4px; }
.btn { display: block; height: 12px; background: #6d6d6d; border-radius: 3px; text-align: center; line-height: 12px; color: #e6e6e6; font-size: 7.300px; }
.btn.dim { background: #3c3c3c; color: #606060; }
.btn.mid { background: #5e5e5e; color: #c8c8c8; }
.btn.full { width: 134px; }
.auto { display: flex; align-items: center; height: 12px; }
.check { width: 8px; height: 8px; background: #2a6fe0; border-radius: 2px; display: flex; align-items: center; justify-content: center; }
.check svg { width: 7px; height: 7px; }
.auto-label { margin-left: 4px; color: #9c9c9c; }
.select { margin-left: auto; width: 59px; height: 12px; background: #5a5a5a; border-radius: 3px; display: flex; align-items: center; justify-content: space-between; padding-left: 5px; color: #c8c8c8; }
.sel-arrow { width: 10px; height: 12px; background: #2a6fe0; border-radius: 3px; display: flex; align-items: center; justify-content: center; }
.sel-arrow svg { width: 5px; height: 8px; }
.ins-foot { margin-top: auto; padding: 0 9px 7px 8px; }

/* tools */
.tools { width: 24px; flex: none; display: flex; flex-direction: column; align-items: center; background: #212121; border-left: 1px solid #131313; padding-top: 40px; }
.tool { width: 17px; height: 19.500px; display: flex; align-items: center; justify-content: center; flex: none; }
.tool svg { width: 13px; height: 13px; }
.tool.active { height: 18px; background: #a8a8a8; border-radius: 2px; margin-bottom: 13px; }
.tool.g { margin-top: 12px; }
.tool.last { margin-top: 34px; }
.t-glyph { font-size: 12px; color: #aaa; font-weight: 500; line-height: 1; }

/* dock */
.dock-zone { flex: 1; display: flex; justify-content: center; padding-top: 1px; }
.dock { width: 636px; height: 46px; padding: 6px 6px 0; display: flex; gap: 10px; border-radius: 10px; background: linear-gradient(90deg, #431122, #4e1324 50%, #5b1a2a); border: 1px solid rgba(255, 255, 255, .09); }
.app { width: 31px; height: 31px; flex: none; position: relative; }
.app svg { width: 31px; height: 31px; overflow: visible; }
.app.run::after { content: ""; position: absolute; left: 14.500px; top: 36.500px; width: 2px; height: 2px; border-radius: 50%; background: #c9a8b0; }
.cal-month { font-size: 6.500px; fill: #fff; text-anchor: middle; font-weight: 700; }
.cal-day { font-size: 16px; fill: #222; text-anchor: middle; font-weight: 300; }
.ua { font-size: 7px; fill: #fff; text-anchor: middle; font-weight: 700; }
.notion-n { font-family: "Liberation Serif", serif; font-size: 19px; font-weight: 700; fill: #111; text-anchor: middle; }
.badge { position: absolute; right: -3.500px; top: -2.500px; width: 13px; height: 13px; border-radius: 50%; background: #f03a32; color: #fff; font-size: 8px; line-height: 13px; text-align: center; font-weight: 500; }
.dock-sep { width: 1px; height: 35px; background: rgba(255, 255, 255, .14); margin: 0 6px 0 4px; flex: none; }
.trash { width: 27px; }
.app.trash svg { width: 27px; height: 35px; margin-top: -3px; }
```
